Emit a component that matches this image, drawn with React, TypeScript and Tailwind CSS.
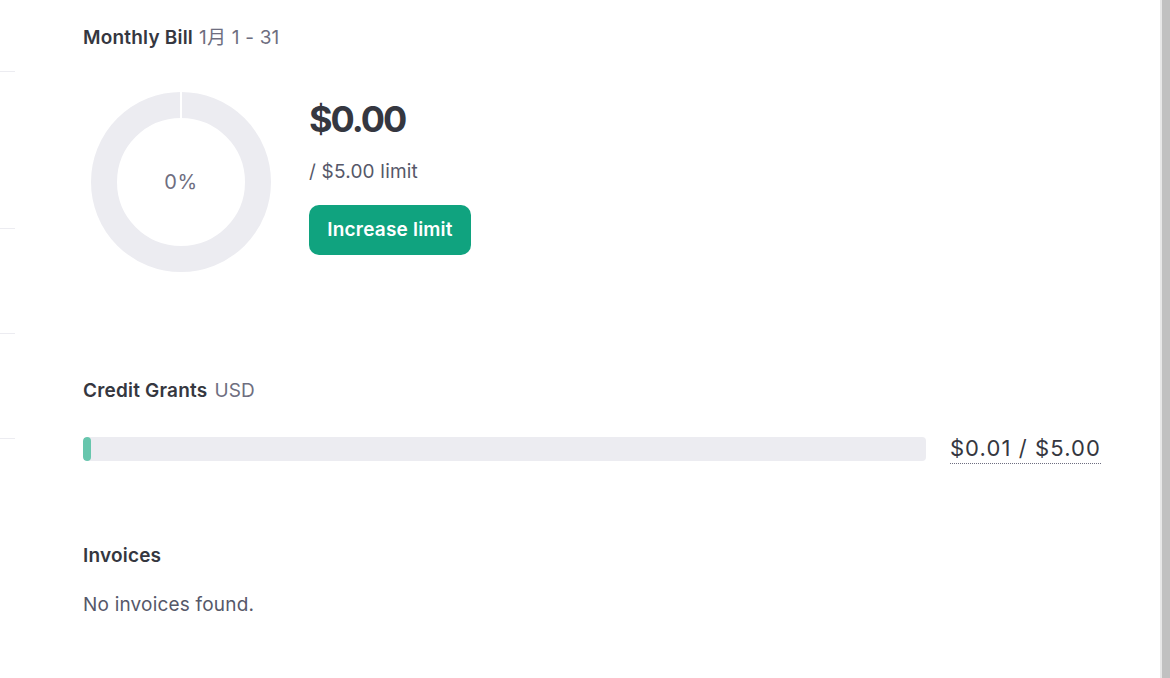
import React from 'react';

const Donut: React.FC<{ percent: number }> = ({ percent }) => (
  <div className="relative w-[180px] h-[180px] shrink-0">
    <svg width="180" height="180" viewBox="0 0 180 180">
      <circle cx="90" cy="90" r="77" fill="none" stroke="#ececf1" strokeWidth="26" />
      <line x1="90" y1="0" x2="90" y2="27" stroke="#ffffff" strokeWidth="2" />
    </svg>
    <div className="absolute inset-0 flex items-center justify-center text-[20px] tracking-[0.5px] text-[#6e6e80]">
      {percent}%
    </div>
  </div>
);

const App: React.FC = () => {
  return (
    <div
      className="flex h-[678px] w-[1170px] overflow-hidden bg-white text-[#353740]"
      style={{ fontFamily: 'Inter, "Noto Sans CJK SC", sans-serif' }}
    >
      {/* edge of the left nav */}
      <div className="w-[15px] shrink-0 flex flex-col">
        <div className="h-[72px] border-b border-[#ececf1]" />
        <div className="h-[157px] border-b border-[#ececf1]" />
        <div className="h-[105px] border-b border-[#ececf1]" />
        <div className="h-[105px] border-b border-[#ececf1]" />
      </div>

      <main className="flex-1 pl-[68px] pr-[59px] pt-[26px] tracking-[0.2px]">
        <section>
          <h2 className="text-[19px] leading-[24px] font-semibold">
            Monthly Bill <span className="ml-[1px] font-normal text-[#6e6e80]">1月 1 - 31</span>
          </h2>
          <div className="flex gap-[38px] mt-[42px] ml-[8px]">
            <Donut percent={0} />
            <div className="flex flex-col pt-[5px]">
              <div className="text-[36px] leading-[44px] font-bold tracking-[-2px]">$0.00</div>
              <div className="mt-[19px] text-[19px] leading-[24px] text-[#565869]">/ $5.00 limit</div>
              <button className="mt-[21px] h-[50px] w-[162px] rounded-[10px] bg-[#10a37f] text-white text-[19px] font-semibold tracking-[0.2px]">
                Increase limit
              </button>
            </div>
          </div>
        </section>

        <section className="mt-[107px]">
          <h2 className="text-[19px] leading-[24px] font-semibold">
            Credit Grants <span className="ml-[2px] font-normal text-[#6e6e80]">USD</span>
          </h2>
          <div className="flex items-center mt-[31px] gap-[24px]">
            <div className="flex-1 h-[24px] rounded-[4px] bg-[#ececf1] overflow-hidden">
              <div className="h-full w-[8px] rounded-[4px] bg-[#67c6ad]" />
            </div>
            <span className="text-[22px] leading-[28px] tracking-[1.1px] border-b border-dotted border-[#6e6e80] pb-[1px]">
              $0.01 / $5.00
            </span>
          </div>
        </section>

        <section className="mt-[80px]">
          <h2 className="text-[19px] leading-[24px] font-semibold">Invoices</h2>
          <p className="mt-[25px] text-[19px] leading-[24px] text-[#565869]">No invoices found.</p>
        </section>
      </main>

      {/* scrollbar */}
      <div className="w-[10px] shrink-0 flex">
        <div className="w-[2px] bg-[#e8e8e8]" />
        <div className="flex-1 bg-[#c1c1c1]" />
      </div>
    </div>
  );
};

export default App;
